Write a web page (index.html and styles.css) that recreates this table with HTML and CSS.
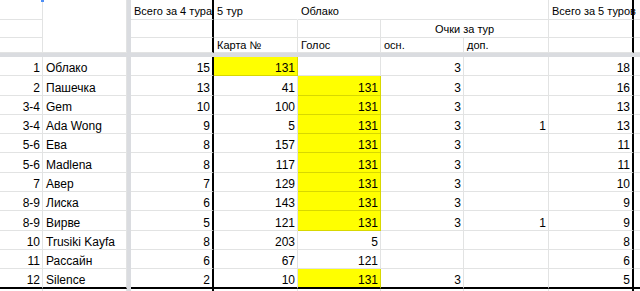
FILE: index.html
```html
<!DOCTYPE html>
<html lang="ru">
<head>
<meta charset="utf-8">
<title>Облако — 5 тур</title>
<link rel="stylesheet" href="styles.css">
</head>
<body>
<div class="sheet">
  <div class="freeze-col"></div>
  <div class="freeze-row"></div>
  <span class="sel-mark"></span>

  <!-- header row 1 -->
  <div class="c"></div>
  <div class="c b-merge"></div>
  <div class="c h tot">Всего за 4 тура</div>
  <div class="c h nb">5 тур</div>
  <div class="c h span3">Облако</div>
  <div class="c h tot">Всего за 5 туров</div>
  <div class="c x"></div>

  <!-- header row 2 -->
  <div class="c"></div>
  <div class="c tot"></div>
  <div class="c"></div>
  <div class="c"></div>
  <div class="c h ctr span2">Очки за тур</div>
  <div class="c tot"></div>
  <div class="c x"></div>

  <!-- header row 3 -->
  <div class="c"></div>
  <div class="c tot"></div>
  <div class="c h h3">Карта №</div>
  <div class="c h h3">Голос</div>
  <div class="c h h3">осн.</div>
  <div class="c h h3">доп.</div>
  <div class="c tot"></div>
  <div class="c x"></div>

  <!-- data -->
  <div class="c n">1</div><div class="c l">Облако</div><div class="c n tot">15</div><div class="c n y">131</div><div class="c n"></div><div class="c n">3</div><div class="c n"></div><div class="c n tot">18</div><div class="c x"></div>
  <div class="c n">2</div><div class="c l">Пашечка</div><div class="c n tot">13</div><div class="c n">41</div><div class="c n y">131</div><div class="c n">3</div><div class="c n"></div><div class="c n tot">16</div><div class="c x"></div>
  <div class="c n">3-4</div><div class="c l">Gem</div><div class="c n tot">10</div><div class="c n">100</div><div class="c n y">131</div><div class="c n">3</div><div class="c n"></div><div class="c n tot">13</div><div class="c x"></div>
  <div class="c n">3-4</div><div class="c l">Ada Wong</div><div class="c n tot">9</div><div class="c n">5</div><div class="c n y">131</div><div class="c n">3</div><div class="c n">1</div><div class="c n tot">13</div><div class="c x"></div>
  <div class="c n">5-6</div><div class="c l">Ева</div><div class="c n tot">8</div><div class="c n">157</div><div class="c n y">131</div><div class="c n">3</div><div class="c n"></div><div class="c n tot">11</div><div class="c x"></div>
  <div class="c n">5-6</div><div class="c l">Madlena</div><div class="c n tot">8</div><div class="c n">117</div><div class="c n y">131</div><div class="c n">3</div><div class="c n"></div><div class="c n tot">11</div><div class="c x"></div>
  <div class="c n">7</div><div class="c l">Авер</div><div class="c n tot">7</div><div class="c n">129</div><div class="c n y">131</div><div class="c n">3</div><div class="c n"></div><div class="c n tot">10</div><div class="c x"></div>
  <div class="c n">8-9</div><div class="c l">Лиска</div><div class="c n tot">6</div><div class="c n">143</div><div class="c n y">131</div><div class="c n">3</div><div class="c n"></div><div class="c n tot">9</div><div class="c x"></div>
  <div class="c n">8-9</div><div class="c l">Вирве</div><div class="c n tot">5</div><div class="c n">121</div><div class="c n y">131</div><div class="c n">3</div><div class="c n">1</div><div class="c n tot">9</div><div class="c x"></div>
  <div class="c n">10</div><div class="c l">Trusiki Kayfa</div><div class="c n tot">8</div><div class="c n">203</div><div class="c n">5</div><div class="c n"></div><div class="c n"></div><div class="c n tot">8</div><div class="c x"></div>
  <div class="c n">11</div><div class="c l">Рассайн</div><div class="c n tot">6</div><div class="c n">67</div><div class="c n">121</div><div class="c n"></div><div class="c n"></div><div class="c n tot">6</div><div class="c x"></div>
  <div class="c n last">12</div><div class="c l last">Silence</div><div class="c n tot last">2</div><div class="c n last">10</div><div class="c n y last">131</div><div class="c n last">3</div><div class="c n last"></div><div class="c n tot last">5</div><div class="c x last"></div>

  <!-- partial next row -->
  <div class="c"></div><div class="c"></div><div class="c tot"></div><div class="c"></div><div class="c"></div><div class="c"></div><div class="c"></div><div class="c tot"></div><div class="c x"></div>
</div>
</body>
</html>
```

FILE: styles.css
```css
html, body {
  margin: 0;
  padding: 0;
  background: #fff;
}

body {
  font-family: "Liberation Sans", Arial, sans-serif;
  font-size: 12px;
  color: #000;
  overflow: hidden;
}

.sheet {
  position: relative;
  display: grid;
  grid-template-columns: 43px 84px 4px 83px 84px 83px 83px 85px 85px 1fr;
  grid-template-rows: 20px 18px 15px 4px repeat(12, 19.3px) 20px;
  width: 640px;
  height: 291px;
  overflow: hidden;
}

.freeze-col {
  grid-column: 3;
  grid-row: 1 / -1;
  background: #dadce0;
}

.freeze-row {
  grid-column: 1 / -1;
  grid-row: 4;
  background: #dadce0;
}

.sel-mark {
  position: absolute;
  left: 41px;
  top: 0;
  width: 3px;
  height: 2px;
  background: #4f8ff5;
}

.c {
  box-sizing: border-box;
  border-right: 1px solid #e2e3e3;
  border-bottom: 1px solid #e2e3e3;
  display: flex;
  align-items: flex-end;
  padding: 0 3px 1px 3px;
  line-height: 12px;
  white-space: nowrap;
  overflow: visible;
  min-width: 0;
}

.h {
  font-size: 11px;
  line-height: 11px;
  padding-left: 3px;
  padding-bottom: 2px;
}

.h3 {
  padding-bottom: 1px;
}

.b-merge {
  grid-row: span 3;
}

.l {
  justify-content: flex-start;
}

.n {
  justify-content: flex-end;
  padding-right: 2px;
}

.ctr {
  justify-content: center;
}

.span2 {
  grid-column: span 2;
}

.span3 {
  grid-column: span 3;
}

.nb {
  border-right-color: transparent;
}

.tot {
  border-right: 2px solid #000;
}

.y {
  background: #ffff00;
  border-bottom-color: #d8d800;
  border-right-color: #d8d800;
}

.last {
  border-bottom: 2px solid #000;
}

.x {
  border-right: none;
}
```
